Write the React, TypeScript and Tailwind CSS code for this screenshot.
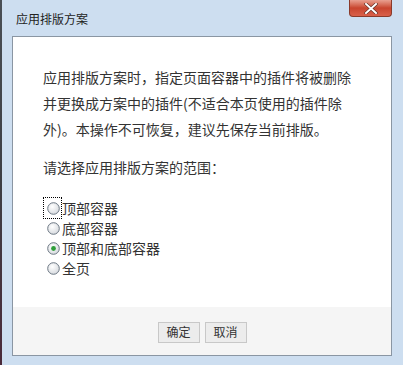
import React from "react";

const Radio = ({ checked }: { checked?: boolean }) => (
  <svg width="13" height="13" viewBox="0 0 13 13" className="shrink-0">
    <defs>
      <radialGradient id={checked ? "rg1" : "rg0"} cx="0.4" cy="0.35" r="0.7">
        <stop offset="0" stopColor="#ffffff" />
        <stop offset="1" stopColor="#d4d8dd" />
      </radialGradient>
    </defs>
    <circle cx="6.5" cy="6.5" r="5.8" fill={`url(#${checked ? "rg1" : "rg0"})`} stroke="#6d7884" strokeWidth="1" />
    {checked && <circle cx="6.5" cy="6.5" r="2.4" fill="#2f9e3a" />}
  </svg>
);

export default function App() {
  const font = { fontFamily: '"Noto Sans CJK SC", "Noto Sans", sans-serif' };
  return (
    <div className="relative w-[403px] h-[365px] bg-[#cddef0] flex" style={font}>
      <div className="w-[2px] h-full bg-gradient-to-b from-[#4a4f55] via-[#3d3f45] to-[#4a2a3a]" />
      <div className="flex-1 flex flex-col pl-[10px] pr-[11px]">
        <div className="h-[36px] flex items-center pl-[4px] pt-[1px] text-[12px] text-[#222]">
          应用排版方案
        </div>
        <div className="h-[320px] border border-[#8a96a3] bg-white flex flex-col">
          <div className="flex-1 pl-[30px] pr-[10px] pt-[27px] text-[14px] text-[#333]">
            <p className="leading-[26px] whitespace-nowrap">
              应用排版方案时，指定页面容器中的插件将被删除
              <br />
              并更换成方案中的插件(不适合本页使用的插件除
              <br />
              外)。本操作不可恢复，建议先保存当前排版。
            </p>
            <p className="mt-[12px] leading-[26px]">请选择应用排版方案的范围：</p>
            <div className="mt-[18px] flex flex-col">
              {[
                ["顶部容器", false, true],
                ["底部容器", false, false],
                ["顶部和底部容器", true, false],
                ["全页", false, false],
              ].map(([label, checked, focus]) => (
                <div key={label as string} className="h-[20px] flex items-center">
                  <span
                    className={`flex items-center pl-[4px] pr-[2px] h-[22px] ${
                      focus ? "outline outline-1 outline-dotted outline-[#000] -outline-offset-1" : ""
                    }`}
                  >
                    <Radio checked={checked as boolean} />
                  </span>
                  <span className="text-[14px] text-[#333]">{label as string}</span>
                </div>
              ))}
            </div>
          </div>
          <div className="h-[48px] bg-[#f5f5f5] flex items-center justify-center gap-[5px] pt-[2px]">
            <button className="w-[42px] h-[21px] border border-[#c8c8c8] bg-[#ececec] text-[12px] text-[#333] flex items-center justify-center">
              确定
            </button>
            <button className="w-[42px] h-[21px] border border-[#c8c8c8] bg-[#ececec] text-[12px] text-[#333] flex items-center justify-center">
              取消
            </button>
          </div>
        </div>
      </div>
      <div className="absolute left-[349px] top-0 w-[43px] h-[17px] rounded-b-[4px] border border-[#8a3a2a] border-t-0 bg-gradient-to-b from-[#e8a090] via-[#c8452e] to-[#d9604a] flex items-center justify-center">
        <svg width="14" height="11" viewBox="0 0 14 11">
          <path d="M2 1 L12 10 M12 1 L2 10" stroke="#5a2a20" strokeWidth="3.2" strokeLinecap="square" />
          <path d="M2 1 L12 10 M12 1 L2 10" stroke="#ffffff" strokeWidth="2" strokeLinecap="square" />
        </svg>
      </div>
    </div>
  );
}
